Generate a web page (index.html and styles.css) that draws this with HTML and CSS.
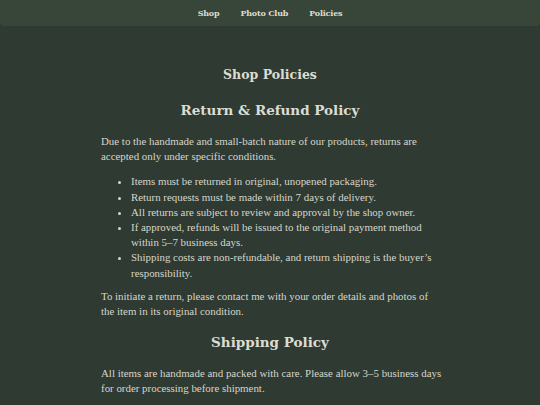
FILE: index.html
```html
<!DOCTYPE html>
<html lang="en">
<head>
<meta charset="utf-8">
<title>Shop Policies</title>
<link rel="stylesheet" href="styles.css">
</head>
<body>
<nav class="nav">
  <a class="nav-link" href="#">Shop</a>
  <a class="nav-link" href="#">Photo Club</a>
  <a class="nav-link" href="#">Policies</a>
</nav>
<main class="content">
  <h1 class="title">Shop Policies</h1>
  <h2 class="section-title">Return &amp; Refund Policy</h2>
  <p class="para">Due to the handmade and small-batch nature of our products, returns are accepted only under specific conditions.</p>
  <ul class="list">
    <li>Items must be returned in original, unopened packaging.</li>
    <li>Return requests must be made within 7 days of delivery.</li>
    <li>All returns are subject to review and approval by the shop owner.</li>
    <li>If approved, refunds will be issued to the original payment method within 5–7 business days.</li>
    <li>Shipping costs are non-refundable, and return shipping is the buyer’s responsibility.</li>
  </ul>
  <p class="para">To initiate a return, please contact me with your order details and photos of the item in its original condition.</p>
  <h2 class="section-title section-title-next">Shipping Policy</h2>
  <p class="para para-wide">All items are handmade and packed with care. Please allow 3–5 business days for order processing before shipment.</p>
</main>
</body>
</html>
```
FILE: styles.css
```css
html, body {
  margin: 0;
  padding: 0;
}
body {
  background: #2f3a32;
  color: #d6d6cb;
  font-family: "Liberation Serif", serif;
  height: 405px;
  overflow: hidden;
}
.nav {
  background: #384539;
  height: 26px;
  display: flex;
  justify-content: center;
  align-items: center;
  gap: 21px;
  border-radius: 0 0 4px 4px;
}
.nav-link {
  color: #dcddd2;
  text-decoration: none;
  font-family: "DejaVu Serif", serif;
  font-size: 8px;
  font-weight: bold;
  letter-spacing: -0.2px;
}
.content {
  width: 338px;
  margin: 0 auto;
  padding-top: 39px;
}
.title {
  font-family: "DejaVu Serif", serif;
  font-weight: bold;
  font-size: 12.5px;
  text-align: center;
  margin: 0;
  line-height: 20px;
  color: #dcdcd2;
}
.section-title {
  font-family: "DejaVu Serif", serif;
  font-weight: bold;
  font-size: 13.5px;
  text-align: center;
  margin: 14px 0 13px;
  line-height: 22px;
  color: #dcdcd2;
}
.section-title-next {
  margin-top: 12px;
}
.para {
  font-size: 10.9px;
  line-height: 15.2px;
  margin: 0 0 10px;
}
.para-wide {
  margin-right: -8px;
}
.list {
  font-size: 10.9px;
  line-height: 15.2px;
  margin: 0 0 8px;
  padding-left: 30px;
}
```
